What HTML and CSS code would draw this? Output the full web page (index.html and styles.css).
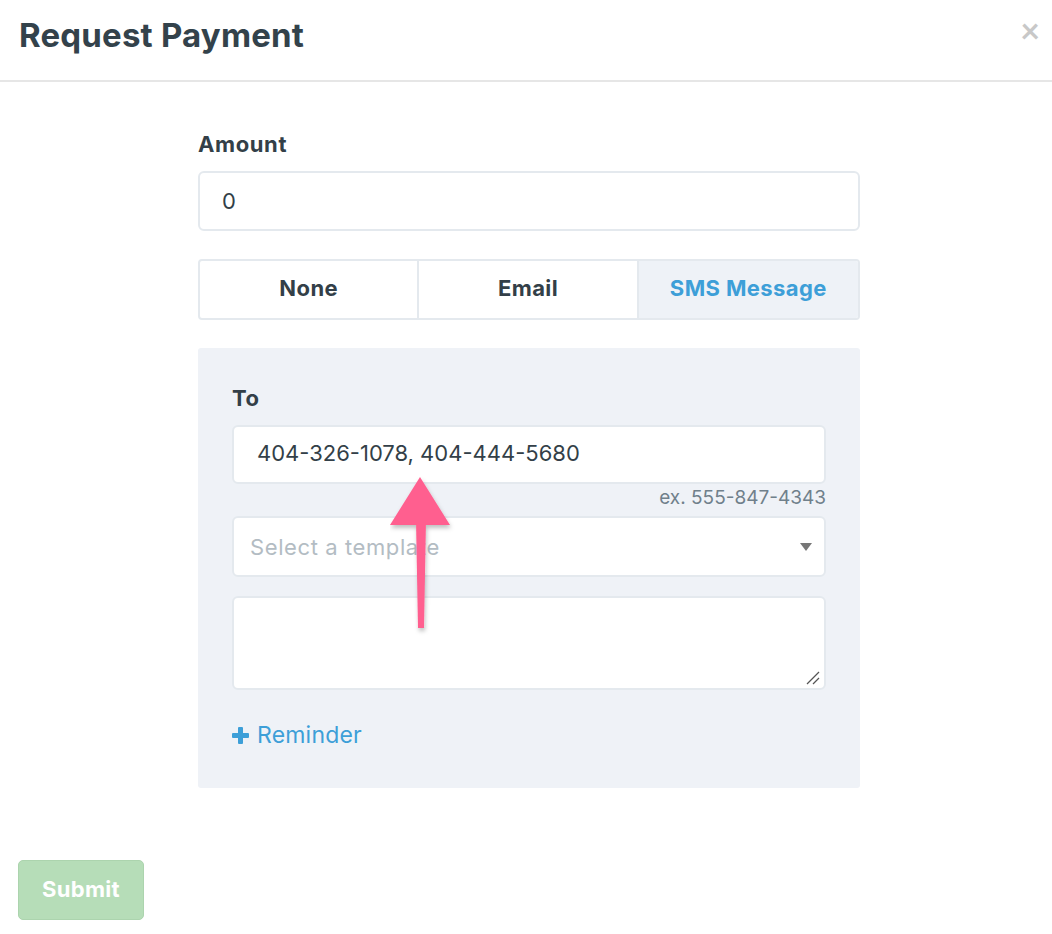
FILE: index.html
```html
<!DOCTYPE html>
<html>
	<head>
		<meta charset="UTF-8">
		<title>Request Payment</title>
		<link rel="stylesheet" href="styles.css">
	</head>
	<body>
		<div class="header">
			<h1 class="title">Request Payment</h1>
			<span class="close">&times;</span>
		</div>
		<div class="form">
			<div class="label">Amount</div>
			<div class="input amount">0</div>
			<div class="tabs">
				<div class="tab">None</div>
				<div class="tab">Email</div>
				<div class="tab active">SMS Message</div>
			</div>
			<div class="panel">
				<div class="label">To</div>
				<div class="input phone">404-326-1078, 404-444-5680</div>
				<div class="hint">ex. 555-847-4343</div>
				<div class="input select">
					<span class="placeholder">Select a template</span>
					<span class="caret"></span>
				</div>
				<div class="input textarea">
					<svg class="grip" width="14" height="14" viewBox="0 0 14 14">
						<line x1="1" y1="13" x2="13" y2="1" stroke="#555" stroke-width="1.2"/>
						<line x1="7" y1="13" x2="13" y2="7" stroke="#555" stroke-width="1.2"/>
					</svg>
				</div>
				<a href="javascript:;" class="reminder"><span class="plus"></span>Reminder</a>
			</div>
		</div>
		<div class="footer">
			<button class="submit">Submit</button>
		</div>
		<svg class="arrow" width="80" height="170" viewBox="0 0 80 170">
			<defs>
				<filter id="sh" x="-50%" y="-50%" width="200%" height="200%">
					<feDropShadow dx="1" dy="3" stdDeviation="2" flood-color="#000" flood-opacity="0.25"/>
				</filter>
			</defs>
			<g filter="url(#sh)" fill="#ff5f8f">
				<polygon points="30,7 60,55 0,55"/>
				<polygon points="26,50 36,50 34,158 28,158"/>
			</g>
		</svg>
	</body>
</html>
```

FILE: styles.css
```css
*{
	padding: 0px;margin: 0px;
	box-sizing: border-box;
}
body{
	font-family: "Inter", "Lato", sans-serif;
	color: #333f48;
	background: #fff;
	width: 1052px;
	height: 934px;
	position: relative;
}
.header{
	height: 82px;
	border-bottom: 2px solid #e6e6e6;
	display: flex;
	justify-content: space-between;
	align-items: flex-start;
	padding: 14px 12px 0 19px;
}
.title{
	font-size: 33px;
	line-height: 42px;
	font-weight: 700;
	color: #33424b;
	letter-spacing: 0.2px;
}
.close{
	font-family: "Lato", sans-serif;
	font-size: 34px;
	line-height: 30px;
	color: #c8c8c8;
	font-weight: 700;
	margin-top: 1px;
}
.form{
	width: 662px;
	margin-left: 198px;
	padding-top: 50px;
}
.label{
	font-size: 22px;
	line-height: 24px;
	font-weight: 700;
	margin-bottom: 15px;
	letter-spacing: 0.6px;
}
.input{
	background: #fff;
	border: 2px solid #e4e9ee;
	border-radius: 6px;
	font-size: 22px;
	display: flex;
	align-items: center;
}
.amount{
	height: 60px;
	padding-left: 22px;
}
.tabs{
	margin-top: 28px;
	height: 61px;
	border: 2px solid #e4e9ee;
	border-radius: 4px;
	display: grid;
	grid-template-columns: 1fr 1fr 1fr;
	overflow: hidden;
}
.tab{
	display: flex;
	align-items: center;
	justify-content: center;
	padding-bottom: 3px;
	font-size: 22px;
	font-weight: 700;
	letter-spacing: 0.4px;
	border-right: 2px solid #e4e9ee;
}
.tab:last-child{
	border-right: none;
}
.tab.active{
	background: #eef2f7;
	color: #3d9fd8;
}
.panel{
	margin-top: 28px;
	background: #eff2f7;
	border-radius: 3px;
	padding: 38px 34px 40px 34px;
}
.phone{
	height: 59px;
	padding-left: 23px;
	padding-bottom: 3px;
}
.hint{
	text-align: right;
	font-size: 19px;
	line-height: 22px;
	color: #70808b;
	margin: 3px 0 7px;
}
.select{
	height: 61px;
	padding: 0 12px 0 16px;
	justify-content: space-between;
}
.placeholder{
	color: #b3bcc3;
	letter-spacing: 0.6px;
}
.caret{
	width: 0;height: 0;
	border-left: 6px solid transparent;
	border-right: 6px solid transparent;
	border-top: 8px solid #777;
}
.textarea{
	height: 94px;
	margin-top: 19px;
	align-items: flex-end;
	justify-content: flex-end;
	padding: 0 4px 3px 0;
}
.reminder{
	display: flex;
	align-items: center;
	margin-top: 32px;
	font-size: 23px;
	line-height: 26px;
	letter-spacing: 0.2px;
	color: #3d9fd8;
	text-decoration: none;
}
.plus{
	width: 17px;height: 17px;
	margin-right: 8px;
	position: relative;
}
.plus::before,.plus::after{
	content: "";
	position: absolute;
	background: #3d9fd8;
	border-radius: 1px;
}
.plus::before{
	left: 0;top: 6px;width: 17px;height: 5px;
}
.plus::after{
	left: 6px;top: 0;width: 5px;height: 17px;
}
.footer{
	padding: 72px 0 0 18px;
}
.submit{
	width: 126px;height: 60px;
	padding-bottom: 3px;
	background: #b6ddb8;
	border: 1px solid #acd4ae;
	border-radius: 5px;
	color: #fff;
	font-family: inherit;
	font-size: 22px;
	letter-spacing: 0.3px;
	font-weight: 700;
}
.arrow{
	position: absolute;
	left: 390px;
	top: 470px;
}
```
